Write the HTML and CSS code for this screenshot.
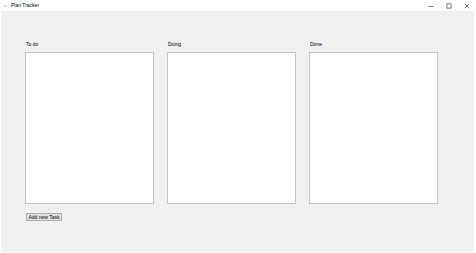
FILE: index.html
```html
<!DOCTYPE html>
<html>
<head>
<meta charset="utf-8">
<link rel="stylesheet" href="styles.css">
</head>
<body>
<div class="window">
  <div class="titlebar">
    <svg class="appicon" width="4" height="4" viewBox="0 0 4 4"><path d="M0.5 2 L3.5 2" stroke="#bbb" stroke-width="1"/></svg>
    <span class="title">Plan Tracker</span>
    <div class="controls">
      <svg class="ctl" width="6" height="6" viewBox="0 0 6 6"><path d="M0.5 3.5 H5.5" stroke="#555" stroke-width="0.8"/></svg>
      <svg class="ctl" width="6" height="6" viewBox="0 0 6 6"><rect x="0.9" y="0.9" width="4.2" height="4.2" fill="none" stroke="#555" stroke-width="0.8"/></svg>
      <svg class="ctl" width="6" height="6" viewBox="0 0 6 6"><path d="M0.8 0.8 L5.2 5.2 M5.2 0.8 L0.8 5.2" stroke="#555" stroke-width="0.8"/></svg>
    </div>
  </div>
  <div class="client">
    <div class="columns">
      <div class="column">
        <div class="label">To do</div>
        <div class="panel"></div>
      </div>
      <div class="column">
        <div class="label">Doing</div>
        <div class="panel"></div>
      </div>
      <div class="column">
        <div class="label">Done</div>
        <div class="panel"></div>
      </div>
    </div>
    <button class="btn">Add new Task</button>
  </div>
</div>
</body>
</html>
```
FILE: styles.css
```css
html, body {
  margin: 0;
  padding: 0;
  background: #ffffff;
}
body {
  font-family: "Liberation Sans", Arial, sans-serif;
  width: 476px;
  height: 253px;
  overflow: hidden;
}
.window {
  width: 476px;
  height: 253px;
  display: flex;
  flex-direction: column;
  box-sizing: border-box;
}
.titlebar {
  height: 11px;
  background: #ffffff;
  display: flex;
  align-items: center;
  padding-left: 3px;
  flex: none;
}
.appicon {
  display: block;
  margin-right: 4px;
}
.title {
  font-size: 5px;
  color: #000;
  line-height: 11px;
}
.controls {
  margin-left: auto;
  display: flex;
  align-items: center;
  gap: 12px;
  padding-right: 6px;
}
.ctl {
  display: block;
}
.client {
  flex: 1;
  background: #f0f0f0;
  margin: 0 2px 1px 1px;
  padding: 30px 0 0 24px;
  display: flex;
  flex-direction: column;
  align-items: flex-start;
}
.columns {
  display: grid;
  grid-template-columns: 129px 129px 129px;
  column-gap: 13px;
}
.column {
  display: flex;
  flex-direction: column;
}
.label {
  font-size: 5px;
  color: #000;
  height: 11px;
  line-height: 6px;
  padding-left: 1px;
}
.panel {
  height: 152px;
  background: #ffffff;
  border: 1px solid #c6c6c6;
  box-sizing: border-box;
}
.btn {
  margin-top: 9px;
  margin-left: 1px;
  width: 36px;
  height: 8px;
  padding: 0;
  font-family: inherit;
  font-size: 5px;
  line-height: 6px;
  background: #e1e1e1;
  border: 1px solid #adadad;
  color: #000;
}
```
